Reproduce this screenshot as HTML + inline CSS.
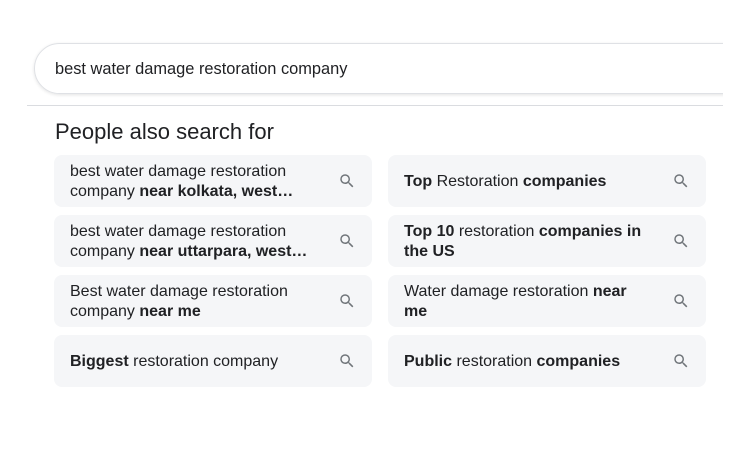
<!DOCTYPE html>
<html><head><style>
body{margin:0;width:750px;height:450px;background:#fff;font-family:"Liberation Sans",Arial,sans-serif;color:#202124;position:relative;overflow:hidden}
.clip{position:absolute;left:0;top:0;width:723px;height:104px;overflow:hidden}
.sb{position:absolute;left:34px;top:43px;width:760px;height:51px;border:1px solid #dfe1e5;border-radius:26px;box-sizing:border-box;box-shadow:0 1px 3px rgba(32,33,36,.12)}
.sb span{position:absolute;left:20px;top:16px;font-size:16.4px;color:#202124}
.hr{position:absolute;left:27px;top:105px;width:696px;height:1px;background:#dadce0}
h2{position:absolute;left:55px;top:119px;margin:0;font-weight:400;font-size:22px;color:#202124}
.c{position:absolute;width:318px;height:52px;background:#f5f6f8;border-radius:8px;box-sizing:border-box;padding:1px 60px 0 16px;display:flex;align-items:center;font-size:16px;line-height:20px;color:#202124}
.c b{font-weight:700}
.c svg{position:absolute;right:16px;top:17px}
</style></head><body>
<div class="clip"><div class="sb"><span>best water damage restoration company</span></div></div>
<div class="hr"></div>
<h2>People also search for</h2>
<div class="c" style="left:54px;top:155px"><div>best water damage restoration company <b>near kolkata, west…</b></div><svg width="18" height="18" viewBox="0 0 24 24"><path fill="#70757a" d="M15.5 14h-.79l-.28-.27A6.47 6.47 0 0 0 16 9.5 6.5 6.5 0 1 0 9.5 16c1.61 0 3.09-.59 4.23-1.57l.27.28v.79l5 4.99L20.49 19l-4.99-5zm-6 0C7.01 14 5 11.99 5 9.5S7.01 5 9.5 5 14 7.01 14 9.5 11.99 14 9.5 14z"/></svg></div>
<div class="c" style="left:388px;top:155px"><div><b>Top</b> Restoration <b>companies</b></div><svg width="18" height="18" viewBox="0 0 24 24"><path fill="#70757a" d="M15.5 14h-.79l-.28-.27A6.47 6.47 0 0 0 16 9.5 6.5 6.5 0 1 0 9.5 16c1.61 0 3.09-.59 4.23-1.57l.27.28v.79l5 4.99L20.49 19l-4.99-5zm-6 0C7.01 14 5 11.99 5 9.5S7.01 5 9.5 5 14 7.01 14 9.5 11.99 14 9.5 14z"/></svg></div>
<div class="c" style="left:54px;top:215px"><div>best water damage restoration company <b>near uttarpara, west…</b></div><svg width="18" height="18" viewBox="0 0 24 24"><path fill="#70757a" d="M15.5 14h-.79l-.28-.27A6.47 6.47 0 0 0 16 9.5 6.5 6.5 0 1 0 9.5 16c1.61 0 3.09-.59 4.23-1.57l.27.28v.79l5 4.99L20.49 19l-4.99-5zm-6 0C7.01 14 5 11.99 5 9.5S7.01 5 9.5 5 14 7.01 14 9.5 11.99 14 9.5 14z"/></svg></div>
<div class="c" style="left:388px;top:215px"><div><b>Top 10</b> restoration <b>companies in the US</b></div><svg width="18" height="18" viewBox="0 0 24 24"><path fill="#70757a" d="M15.5 14h-.79l-.28-.27A6.47 6.47 0 0 0 16 9.5 6.5 6.5 0 1 0 9.5 16c1.61 0 3.09-.59 4.23-1.57l.27.28v.79l5 4.99L20.49 19l-4.99-5zm-6 0C7.01 14 5 11.99 5 9.5S7.01 5 9.5 5 14 7.01 14 9.5 11.99 14 9.5 14z"/></svg></div>
<div class="c" style="left:54px;top:275px"><div>Best water damage restoration company <b>near me</b></div><svg width="18" height="18" viewBox="0 0 24 24"><path fill="#70757a" d="M15.5 14h-.79l-.28-.27A6.47 6.47 0 0 0 16 9.5 6.5 6.5 0 1 0 9.5 16c1.61 0 3.09-.59 4.23-1.57l.27.28v.79l5 4.99L20.49 19l-4.99-5zm-6 0C7.01 14 5 11.99 5 9.5S7.01 5 9.5 5 14 7.01 14 9.5 11.99 14 9.5 14z"/></svg></div>
<div class="c" style="left:388px;top:275px"><div>Water damage restoration <b>near me</b></div><svg width="18" height="18" viewBox="0 0 24 24"><path fill="#70757a" d="M15.5 14h-.79l-.28-.27A6.47 6.47 0 0 0 16 9.5 6.5 6.5 0 1 0 9.5 16c1.61 0 3.09-.59 4.23-1.57l.27.28v.79l5 4.99L20.49 19l-4.99-5zm-6 0C7.01 14 5 11.99 5 9.5S7.01 5 9.5 5 14 7.01 14 9.5 11.99 14 9.5 14z"/></svg></div>
<div class="c" style="left:54px;top:335px"><div><b>Biggest</b> restoration company</div><svg width="18" height="18" viewBox="0 0 24 24"><path fill="#70757a" d="M15.5 14h-.79l-.28-.27A6.47 6.47 0 0 0 16 9.5 6.5 6.5 0 1 0 9.5 16c1.61 0 3.09-.59 4.23-1.57l.27.28v.79l5 4.99L20.49 19l-4.99-5zm-6 0C7.01 14 5 11.99 5 9.5S7.01 5 9.5 5 14 7.01 14 9.5 11.99 14 9.5 14z"/></svg></div>
<div class="c" style="left:388px;top:335px"><div><b>Public</b> restoration <b>companies</b></div><svg width="18" height="18" viewBox="0 0 24 24"><path fill="#70757a" d="M15.5 14h-.79l-.28-.27A6.47 6.47 0 0 0 16 9.5 6.5 6.5 0 1 0 9.5 16c1.61 0 3.09-.59 4.23-1.57l.27.28v.79l5 4.99L20.49 19l-4.99-5zm-6 0C7.01 14 5 11.99 5 9.5S7.01 5 9.5 5 14 7.01 14 9.5 11.99 14 9.5 14z"/></svg></div>
</body></html>
